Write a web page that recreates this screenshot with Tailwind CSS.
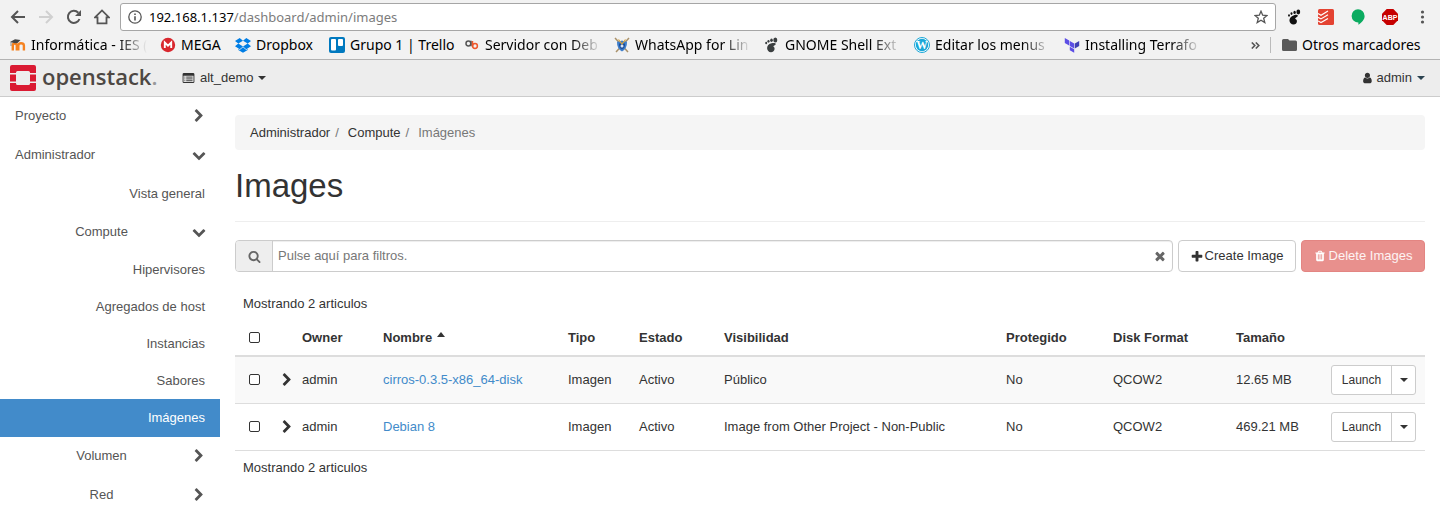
<!DOCTYPE html>
<html lang="es">
<head>
<meta charset="utf-8">
<meta name="viewport" content="width=device-width, initial-scale=1">
<title>Images - OpenStack Dashboard</title>
<script src="https://cdn.jsdelivr.net/npm/@tailwindcss/browser@4"></script>
</head>
<body class="min-h-screen bg-white font-['Liberation_Sans',Arial,sans-serif] text-[13px] leading-[18px] text-[#333]">

<!-- Icon definitions -->
<svg class="hidden" aria-hidden="true">
  <symbol id="chevron-right" viewBox="0 0 1792 1792"><path d="M1363 877l-742 742q-19 19-45 19t-45-19l-166-166q-19-19-19-45t19-45l531-531-531-531q-19-19-19-45t19-45l166-166q19-19 45-19t45 19l742 742q19 19 19 45t-19 45z"/></symbol>
  <symbol id="chevron-down" viewBox="0 0 1792 1792"><path d="M1683 808l-742 741q-19 19-45 19t-45-19l-742-741q-19-19-19-45.500t19-45.500l166-165q19-19 45-19t45 19l531 531 531-531q19-19 45-19t45 19l166 165q19 19 19 45.500t-19 45.500z"/></symbol>
  <symbol id="caret" viewBox="0 0 8 4"><path d="M0 0h8L4 4z"/></symbol>
</svg>

<!-- Browser chrome -->
<header class="border-b border-[#b3b3b3] bg-[#f2f2f2] font-['Noto_Sans','Open_Sans',sans-serif] text-black">
  <div class="flex h-[34px] items-center pr-[10px] pl-[10px]">
    <nav class="flex gap-3 text-[#555]" aria-label="Navegador">
      <button aria-label="Atrás"><svg class="size-4" viewBox="0 0 16 16" fill="none" stroke="currentColor" stroke-width="2"><path d="M15 8H2.500M8 2L2 8l6 6"/></svg></button>
      <button aria-label="Adelante" class="text-[#d0d0d0]"><svg class="size-4" viewBox="0 0 16 16" fill="none" stroke="currentColor" stroke-width="2"><path d="M1 8h12.500M8 2l6 6-6 6"/></svg></button>
      <button aria-label="Recargar"><svg class="size-4" viewBox="0 0 16 16" fill="none" stroke="currentColor" stroke-width="2"><path d="M13.500 10A6 6 0 1 1 12.300 3.800"/><path d="M15 1v6H9z" fill="currentColor" stroke="none"/></svg></button>
      <button aria-label="Inicio"><svg class="size-4" viewBox="0 0 16 16" fill="none" stroke="currentColor" stroke-width="1.800"><path d="M1 8.400L8 1.400l7 7h-2.500v6h-9v-6z"/></svg></button>
    </nav>
    <div class="ml-[10px] flex h-7 flex-1 items-center rounded-[3px] border border-[#a6a6a6] bg-white pr-[7px] pl-[7px]">
      <svg class="size-[14px] shrink-0 text-[#555]" viewBox="0 0 14 14" fill="none" stroke="currentColor" stroke-width="1.300"><circle cx="7" cy="7" r="6.200"/><path d="M7 6.200v4.200M7 3.500v1.500" stroke-width="1.600"/></svg>
      <div class="ml-[7px] flex-1 text-[13px] whitespace-nowrap" role="textbox" aria-label="Dirección">192.168.1.137<span class="text-[#7c7c7c]">/dashboard/admin/images</span></div>
      <button aria-label="Añadir a marcadores"><svg class="size-[14px] text-[#555]" viewBox="0 0 14 14" fill="none" stroke="currentColor" stroke-width="1.300"><path d="M7 1.200l1.700 4 4.300.3-3.300 2.800 1.100 4.200L7 10.200l-3.800 2.300 1.100-4.200L1 5.500l4.300-.3z"/></svg></button>
    </div>
    <div class="ml-[10px] flex items-center gap-4">
      <button aria-label="GNOME"><svg class="size-4" viewBox="0 0 16 16" fill="#111"><path d="M8 6.200C12 5 13 7 10.500 8.300c-1.800 1-1.500 1.600-.6 2 1.600.7 1.600 5-2.200 5.200C2.500 15.500 1.500 8 8 6.200z"/><ellipse cx="12.300" cy="3" rx="1.900" ry="2.400"/><ellipse cx="8.600" cy="3.400" rx="1.200" ry="1.700"/><ellipse cx="5.500" cy="4.600" rx="1" ry="1.400"/><ellipse cx="3" cy="6.400" rx=".9" ry="1.200"/></svg></button>
      <button aria-label="Todoist"><svg class="size-4" viewBox="0 0 16 16"><rect width="16" height="16" rx="1.500" fill="#e44332"/><path d="M0 4.500l3 1.700L10 2M0 8.200l3 1.700 7-4.200M0 11.900l3 1.700 7-4.200" fill="none" stroke="#fff" stroke-width="1.200"/></svg></button>
      <button aria-label="Hangouts"><svg class="size-4" viewBox="0 0 16 16"><path d="M8 .3a6.600 6.600 0 0 1 6.600 6.600c0 3.800-3 6.500-6.200 8.900v-2.300A6.600 6.600 0 1 1 8 .3z" fill="#0bab60"/></svg></button>
      <button aria-label="Adblock Plus"><svg class="size-4" viewBox="0 0 16 16"><path d="M4.700 0h6.600L16 4.700v6.600L11.300 16H4.700L0 11.300V4.700z" fill="#c60000"/><text x="8" y="10.800" text-anchor="middle" font-family="Liberation Sans" font-weight="bold" font-size="7" fill="#fff">ABP</text></svg></button>
      <button aria-label="Menú"><svg class="size-4" viewBox="0 0 16 16" fill="#555"><circle cx="8.500" cy="3" r="1.600"/><circle cx="8.500" cy="8" r="1.600"/><circle cx="8.500" cy="13" r="1.600"/></svg></button>
    </div>
  </div>

  <div class="flex h-[25px] items-center pr-[14px] pb-[3px] pl-[10px] text-[14px] whitespace-nowrap">
    <nav class="flex flex-1 items-center gap-[13px]" aria-label="Marcadores">
      <a href="#" class="flex items-center gap-[5px]"><svg class="size-4 shrink-0" viewBox="0 0 16 16"><path d="M2.800 13.500V8.500q0-2 2-2t2 2v5M8.300 13.500V8.500q0-2.200 2.700-2.200T13.900 8.500v5M8 13.500V8" fill="none" stroke="#f58220" stroke-width="2.400"/><path d="M0 5l5-2.800 5.500.8-3 3L5 6.300z" fill="#444"/><path d="M1 5v4" stroke="#777" stroke-width=".8"/></svg><span class="w-[116px] [mask-image:linear-gradient(to_right,black_75%,transparent)]">Informática - IES (</span></a>
      <a href="#" class="flex items-center gap-[5px]"><svg class="size-4 shrink-0" viewBox="0 0 16 16"><circle cx="8" cy="8" r="7.200" fill="#d9272e"/><path d="M4.800 11V5.500L8 8.700l3.200-3.200V11" fill="none" stroke="#fff" stroke-width="1.900"/></svg><span class="w-[41px]">MEGA</span></a>
      <a href="#" class="flex items-center gap-[5px]"><svg class="size-4 shrink-0" viewBox="0 0 16 16" fill="#007ee5"><path d="M4.700 1L0 4l3.300 2.600L8 3.700zM11.300 1L16 4l-3.300 2.600L8 3.700zM0 9.300l4.700 3L8 9.600 3.300 6.600zM16 9.300l-4.700 3L8 9.600l4.700-3zM8 10.300l-3.300 2.700-1.400-.9v1l4.700 2.600 4.700-2.600v-1l-1.400.9z"/></svg><span class="w-[60px]">Dropbox</span></a>
      <a href="#" class="flex items-center gap-[5px]"><svg class="size-4 shrink-0" viewBox="0 0 16 16"><rect width="16" height="16" rx="2" fill="#0079bf"/><rect x="2" y="2" width="5" height="11.500" rx="1" fill="#fff"/><rect x="9" y="2" width="5" height="7" rx="1" fill="#fff"/></svg><span class="w-[101px]">Grupo 1 | Trello</span></a>
      <a href="#" class="flex items-center gap-[5px]"><svg class="size-4 shrink-0" viewBox="0 0 16 16" fill="none" stroke-width="1.500"><circle cx="4.400" cy="6.500" r="2.400" stroke="#555"/><path d="M7 3.800v5.500" stroke="#555"/><circle cx="11" cy="9" r="2.400" stroke="#f0582c"/><path d="M8.500 4v5.500" stroke="#f0582c"/></svg><span class="w-[116px] [mask-image:linear-gradient(to_right,black_75%,transparent)]">Servidor con Deb</span></a>
      <a href="#" class="flex items-center gap-[5px]"><svg class="size-4 shrink-0" viewBox="0 0 16 16"><path d="M1 1l13 14M15 1L2 15" stroke="#a9916a" stroke-width="1.500"/><path d="M3 4.500q2.500.5 5-1 2.500 1.500 5 1 .3 7-5 10-5.300-3-5-10z" fill="#3f7fcb"/><path d="M5 6.500h6v2q-.5 3-3 4-2.500-1-3-4z" fill="#1d4f9c"/><path d="M4.500 2.500L8 7l3.500-4.500" fill="none" stroke="#d9a23a" stroke-width="1.200"/><circle cx="8" cy="9" r="1.500" fill="#d8e6f7"/></svg><span class="w-[116px] [mask-image:linear-gradient(to_right,black_75%,transparent)]">WhatsApp for Lin</span></a>
      <a href="#" class="flex items-center gap-[5px]"><svg class="size-4 shrink-0" viewBox="0 0 16 16" fill="#3b3f40"><path d="M7.500 6.300c4.500-.8 5.300.8 3.300 2-1.500 1-1.700 1.200-.9 1.800 1.500.8.700 5.300-2.900 5.200C2.500 15.200 1 8 7.500 6.300z"/><ellipse cx="11.300" cy="2.900" rx="2" ry="2.500"/><ellipse cx="7.500" cy="3.300" rx="1.300" ry="1.700"/><ellipse cx="4.500" cy="4.300" rx="1.100" ry="1.400"/><ellipse cx="2.200" cy="6" rx="1" ry="1.300"/></svg><span class="w-[116px] [mask-image:linear-gradient(to_right,black_75%,transparent)]">GNOME Shell Ext</span></a>
      <a href="#" class="flex items-center gap-[5px]"><svg class="size-4 shrink-0" viewBox="0 0 16 16"><circle cx="8" cy="8" r="7.500" fill="#fff" stroke="#1aa7d8"/><circle cx="8" cy="8" r="6.200" fill="#1aa7d8"/><text x="8" y="12" text-anchor="middle" font-family="Liberation Serif" font-weight="bold" font-size="11.500" fill="#fff">W</text></svg><span class="w-[116px] [mask-image:linear-gradient(to_right,black_75%,transparent)]">Editar los menus</span></a>
      <a href="#" class="flex items-center gap-[5px]"><svg class="size-4 shrink-0" viewBox="0 0 16 16" fill="#5c4ee5"><path d="M.8 1l4.400 2.500v5L.8 6zM5.800 4l4.400 2.500v5L5.800 9zM5.800 9.800l4.400 2.500v3.500l-4.400-2.500z"/><path d="M15.200 4l-4.400 2.500v5L15.200 9z" fill="#4040b2"/></svg><span class="w-[116px] [mask-image:linear-gradient(to_right,black_75%,transparent)]">Installing Terrafo</span></a>
    </nav>
    <button class="mr-[10px]" aria-label="Más marcadores"><svg class="h-[7px] w-[9px]" viewBox="0 0 9 7" fill="none" stroke="#555" stroke-width="1.600"><path d="M.8.500l3 3-3 3M4.800.500l3 3-3 3"/></svg></button>
    <button class="flex items-center gap-[5px] border-l border-[#bbb] pl-[11px] leading-4"><svg class="h-3 w-[15px]" viewBox="0 0 15 12" fill="#5a5a5a"><path d="M1.500 0H6l1.500 1.500h6q1.500 0 1.500 1.500v7.500q0 1.500-1.500 1.500h-12Q0 12 0 10.500v-9Q0 0 1.500 0z"/></svg><span class="min-w-[124px] text-left">Otros marcadores</span></button>
  </div>
</header>

<!-- OpenStack top bar -->
<header class="flex h-[37px] items-center border-b border-[#ccc] bg-[#ededed] pr-[15px] pl-[10px]">
  <a href="#" class="flex items-center gap-[6px] text-[#4d4844]" aria-label="openstack">
    <svg class="size-[26px]" viewBox="0 0 26 26" fill="#da1a32"><path d="M2 0h22q2 0 2 2v6h-6V7.500Q20 6 18.500 6h-11Q6 6 6 7.500V8H0V2Q0 0 2 0zM0 18h6v.5Q6 20 7.500 20h11q1.500 0 1.500-1.500V18h6v6q0 2-2 2H2q-2 0-2-2zM0 9.500h6v7H0zM20 9.500h6v7h-6z"/></svg>
    <span class="w-[115px] pb-1 font-['Open_Sans',sans-serif] text-[22px] leading-7 font-semibold whitespace-nowrap">openstack<span class="text-[#999]">.</span></span>
  </a>
  <button class="ml-[25px] flex items-center gap-[5px]"><svg class="h-[10px] w-[13px]" viewBox="0 0 13 11"><path d="M1.500 0h10Q13 0 13 1.500v8q0 1.500-1.500 1.500h-10Q0 11 0 9.500v-8Q0 0 1.500 0zM1 3v6.500q0 .5.500.5h10q.5 0 .5-.5V3z" fill="#333" fill-rule="evenodd"/><path d="M2 4.500h1M4 4.500h7M2 6.500h1M4 6.500h7M2 8.500h1M4 8.500h7" stroke="#333"/></svg>alt_demo<svg class="h-1 w-2" fill="#333"><use href="#caret"/></svg></button>
  <button class="ml-auto flex items-center gap-[5px]"><svg class="h-3 w-[10px]" viewBox="128 0 1408 1792" fill="#333"><path d="M1536 1399q0 109-62.500 187t-150.500 78h-854q-88 0-150.500-78t-62.500-187q0-85 8.500-160.500t31.500-152 58.500-131 94-89 134.500-34.500q131 128 313 128t313-128q76 0 134.500 34.500t94 89 58.500 131 31.500 152 8.500 160.500zm-256-887q0 159-112.500 271.500t-271.500 112.500-271.500-112.500-112.500-271.500 112.500-271.500 271.500-112.500 271.500 112.500 112.500 271.500z"/></svg>admin<svg class="h-1 w-2" fill="#2b4350"><use href="#caret"/></svg></button>
</header>

<div class="flex">
  <!-- Sidebar -->
  <nav class="w-[220px] shrink-0 text-[#555]" aria-label="Paneles">
    <a href="#" class="flex h-[38px] items-center justify-between pr-[14px] pl-[15px]">Proyecto<svg class="size-[14px]" fill="#555"><use href="#chevron-right"/></svg></a>
    <a href="#" class="flex h-[39px] items-center justify-between pr-[14px] pl-[15px]">Administrador<svg class="size-[14px]" fill="#555"><use href="#chevron-down"/></svg></a>
    <a href="#" class="flex h-[39px] items-center justify-end px-[15px]">Vista general</a>
    <a href="#" class="flex h-[38px] items-center pr-[14px] pl-[15px]"><span class="flex-1 pr-1 text-center">Compute</span><svg class="size-[14px]" fill="#555"><use href="#chevron-down"/></svg></a>
    <a href="#" class="flex h-[37px] items-center justify-end px-[15px]">Hipervisores</a>
    <a href="#" class="flex h-[37px] items-center justify-end px-[15px]">Agregados de host</a>
    <a href="#" class="flex h-[37px] items-center justify-end px-[15px]">Instancias</a>
    <a href="#" class="flex h-[37px] items-center justify-end px-[15px]">Sabores</a>
    <a href="#" class="flex h-[38px] items-center justify-end bg-[#428bca] px-[15px] text-white" aria-current="page">Imágenes</a>
    <a href="#" class="flex h-[38px] items-center pr-[14px] pl-[15px]"><span class="flex-1 pr-1 text-center">Volumen</span><svg class="size-[14px]" fill="#555"><use href="#chevron-right"/></svg></a>
    <a href="#" class="flex h-[39px] items-center pr-[14px] pl-[15px]"><span class="flex-1 pr-1 text-center">Red</span><svg class="size-[14px]" fill="#555"><use href="#chevron-right"/></svg></a>
  </nav>

  <!-- Page content -->
  <main class="min-w-0 flex-1 px-[15px] pt-[18px]">
    <ol class="flex h-[35px] items-center rounded bg-[#f5f5f5] px-[15px]">
      <li><a href="#">Administrador</a></li>
      <li class="px-[5px] text-[#777]">/</li>
      <li class="pl-[4px]"><a href="#">Compute</a></li>
      <li class="px-[5px] text-[#777]">/</li>
      <li class="pl-[4px] text-[#777]">Imágenes</li>
    </ol>
    <h1 class="mt-[18px] mb-[18px] border-b border-[#eee] pb-[18px] text-[33px] leading-[35px]">Images</h1>

    <div class="flex gap-[5px]">
      <div class="flex h-8 flex-1 items-center rounded border border-[#ccc] shadow-[inset_0_1px_1px_rgba(0,0,0,0.075)]">
        <label for="filter" class="flex h-full w-[37px] items-center justify-center rounded-l-[3px] border-r border-[#ccc] bg-[#eee]" aria-label="Filtrar"><svg class="size-[13px]" viewBox="0 0 1792 1792" fill="#666"><path d="M1216 832q0-185-131.500-316.500t-316.500-131.500-316.500 131.500-131.500 316.500 131.500 316.500 316.500 131.500 316.500-131.500 131.500-316.500zm512 832q0 52-38 90t-90 38q-54 0-90-38l-343-342q-179 124-399 124-143 0-273.500-55.500t-225-150-150-225-55.500-273.500 55.500-273.500 150-225 225-150 273.500-55.500 273.500 55.500 225 150 150 225 55.500 273.500q0 220-124 399l343 343q37 37 37 90z"/></svg></label>
        <input id="filter" type="text" placeholder="Pulse aquí para filtros." class="min-w-0 flex-1 bg-transparent px-[5px] outline-none placeholder:text-[#777]">
        <button class="mr-[5px]" aria-label="Borrar filtro"><svg class="size-[14px]" viewBox="0 0 1792 1792" fill="#666"><path d="M1490 1322q0 40-28 68l-136 136q-28 28-68 28t-68-28l-294-294-294 294q-28 28-68 28t-68-28l-136-136q-28-28-28-68t28-68l294-294-294-294q-28-28-28-68t28-68l136-136q28-28 68-28t68 28l294 294 294-294q28-28 68-28t68 28l136 136q28 28 28 68t-28 68l-294 294 294 294q28 28 28 68z"/></svg></button>
      </div>
      <button class="flex h-8 w-[118px] items-center justify-center gap-[2px] rounded border border-[#ccc]"><svg class="size-3" viewBox="100 0 1592 1592" fill="#333"><path d="M1600 736v192q0 40-28 68t-68 28h-416v416q0 40-28 68t-68 28h-192q-40 0-68-28t-28-68v-416h-416q-40 0-68-28t-28-68v-192q0-40 28-68t68-28h416v-416q0-40 28-68t68-28h192q40 0 68 28t28 68v416h416q40 0 68 28t28 68z"/></svg>Create Image</button>
      <button disabled class="flex h-8 w-[124px] items-center justify-center gap-[3px] rounded border border-[#e38582] bg-[#e8908d] text-white/90"><svg class="size-3" viewBox="0 0 1792 1792" fill="#fff"><path d="M704 1376v-704q0-14-9-23t-23-9h-64q-14 0-23 9t-9 23v704q0 14 9 23t23 9h64q14 0 23-9t9-23zm256 0v-704q0-14-9-23t-23-9h-64q-14 0-23 9t-9 23v704q0 14 9 23t23 9h64q14 0 23-9t9-23zm256 0v-704q0-14-9-23t-23-9h-64q-14 0-23 9t-9 23v704q0 14 9 23t23 9h64q14 0 23-9t9-23zm-544-992h448l-48-117q-7-9-17-11h-317q-10 2-17 11zm928 32v64q0 14-9 23t-23 9h-96v948q0 83-47 143.500t-113 60.500h-832q-66 0-113-58.500t-47-141.500v-952h-96q-14 0-23-9t-9-23v-64q0-14 9-23t23-9h309l70-167q15-37 54-63t79-26h320q40 0 79 26t54 63l70 167h309q14 0 23 9t9 23z"/></svg>Delete Images</button>
    </div>

    <p class="mt-[23px] px-2">Mostrando 2 articulos</p>
    <table class="mt-[7px] w-full table-fixed border-collapse text-left whitespace-nowrap">
      <colgroup><col class="w-[39px]"><col class="w-[20px]"><col class="w-[81px]"><col class="w-[185px]"><col class="w-[71px]"><col class="w-[85px]"><col><col class="w-[107px]"><col class="w-[123px]"><col class="w-[95px]"><col class="w-[102px]"></colgroup>
      <thead>
        <tr class="h-[36px] border-b-2 border-[#ddd]">
          <th class="pl-[14px]"><input type="checkbox" aria-label="Seleccionar todo" class="block size-[11px] appearance-none rounded-[2px] border border-[#333] bg-white"></th>
          <th></th>
          <th class="px-2">Owner</th>
          <th class="px-2"><button class="flex items-center gap-[5px] font-bold">Nombre<svg class="mb-[7px] h-[5px] w-2 rotate-180" viewBox="0 0 8 4" preserveAspectRatio="none" fill="#333"><path d="M0 0h8L4 4z"/></svg></button></th>
          <th class="px-2">Tipo</th><th class="px-2">Estado</th><th class="px-2">Visibilidad</th><th class="px-2">Protegido</th><th class="px-2">Disk Format</th><th class="px-2">Tamaño</th><th></th>
        </tr>
      </thead>
      <tbody>
        <tr class="h-[47px] border-b border-[#ddd] bg-[#f9f9f9]">
          <td class="pl-[14px]"><input type="checkbox" aria-label="Seleccionar cirros-0.3.5-x86_64-disk" class="block size-[11px] appearance-none rounded-[2px] border border-[#333] bg-white"></td>
          <td class="pl-[6px]"><button class="block" aria-label="Expandir"><svg class="size-[14px]" fill="#333"><use href="#chevron-right"/></svg></button></td>
          <td class="px-2">admin</td>
          <td class="px-2"><a href="#" class="text-[#428bca]">cirros-0.3.5-x86_64-disk</a></td>
          <td class="px-2">Imagen</td><td class="px-2">Activo</td><td class="px-2">Público</td><td class="px-2">No</td><td class="px-2">QCOW2</td><td class="px-2">12.65 MB</td>
          <td class="pl-2"><div class="flex h-[30px] w-[85px] rounded-[3px] border border-[#ccc] bg-white text-[12px]"><button class="flex-1">Launch</button><button class="flex w-6 items-center justify-center border-l border-[#ccc]" aria-label="Más acciones"><svg class="h-1 w-2" fill="#333"><use href="#caret"/></svg></button></div></td>
        </tr>
        <tr class="h-[47px] border-b border-[#ddd]">
          <td class="pl-[14px]"><input type="checkbox" aria-label="Seleccionar Debian 8" class="block size-[11px] appearance-none rounded-[2px] border border-[#333] bg-white"></td>
          <td class="pl-[6px]"><button class="block" aria-label="Expandir"><svg class="size-[14px]" fill="#333"><use href="#chevron-right"/></svg></button></td>
          <td class="px-2">admin</td>
          <td class="px-2"><a href="#" class="text-[#428bca]">Debian 8</a></td>
          <td class="px-2">Imagen</td><td class="px-2">Activo</td><td class="px-2">Image from Other Project - Non-Public</td><td class="px-2">No</td><td class="px-2">QCOW2</td><td class="px-2">469.21 MB</td>
          <td class="pl-2"><div class="flex h-[30px] w-[85px] rounded-[3px] border border-[#ccc] bg-white text-[12px]"><button class="flex-1">Launch</button><button class="flex w-6 items-center justify-center border-l border-[#ccc]" aria-label="Más acciones"><svg class="h-1 w-2" fill="#333"><use href="#caret"/></svg></button></div></td>
        </tr>
      </tbody>
    </table>
    <p class="mt-2 px-2">Mostrando 2 articulos</p>
  </main>
</div>
</body>
</html>
